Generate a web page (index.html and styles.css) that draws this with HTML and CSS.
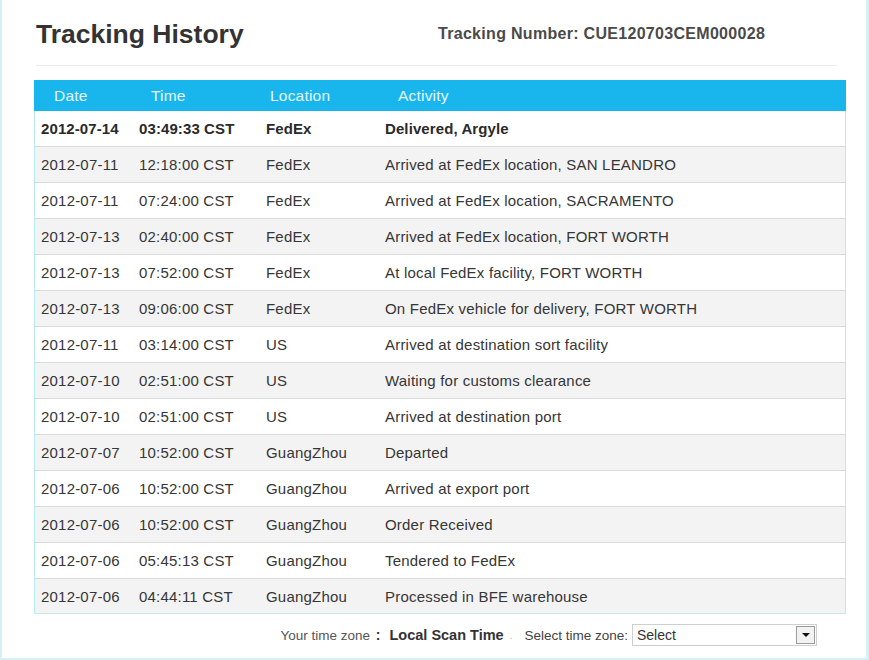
FILE: index.html
```html
<!DOCTYPE html>
<html>
<head>
<meta charset="utf-8">
<link rel="stylesheet" href="styles.css">
</head>
<body>
<div class="frame">
  <div class="wrap">
    <div class="top">
      <h1 class="title">Tracking History</h1>
      <div class="tracking">Tracking Number: CUE120703CEM000028</div>
    </div>
    <div class="sep"></div>
    <div class="table">
      <div class="thead">
        <div class="h h-date">Date</div>
        <div class="h h-time">Time</div>
        <div class="h h-loc">Location</div>
        <div class="h h-act">Activity</div>
      </div>
      <div class="row bold"><div>2012-07-14</div><div>03:49:33 CST</div><div>FedEx</div><div>Delivered, Argyle</div></div>
      <div class="row"><div>2012-07-11</div><div>12:18:00 CST</div><div>FedEx</div><div>Arrived at FedEx location, SAN LEANDRO</div></div>
      <div class="row"><div>2012-07-11</div><div>07:24:00 CST</div><div>FedEx</div><div>Arrived at FedEx location, SACRAMENTO</div></div>
      <div class="row"><div>2012-07-13</div><div>02:40:00 CST</div><div>FedEx</div><div>Arrived at FedEx location, FORT WORTH</div></div>
      <div class="row"><div>2012-07-13</div><div>07:52:00 CST</div><div>FedEx</div><div>At local FedEx facility, FORT WORTH</div></div>
      <div class="row"><div>2012-07-13</div><div>09:06:00 CST</div><div>FedEx</div><div>On FedEx vehicle for delivery, FORT WORTH</div></div>
      <div class="row"><div>2012-07-11</div><div>03:14:00 CST</div><div>US</div><div>Arrived at destination sort facility</div></div>
      <div class="row"><div>2012-07-10</div><div>02:51:00 CST</div><div>US</div><div>Waiting for customs clearance</div></div>
      <div class="row"><div>2012-07-10</div><div>02:51:00 CST</div><div>US</div><div>Arrived at destination port</div></div>
      <div class="row"><div>2012-07-07</div><div>10:52:00 CST</div><div>GuangZhou</div><div>Departed</div></div>
      <div class="row"><div>2012-07-06</div><div>10:52:00 CST</div><div>GuangZhou</div><div>Arrived at export port</div></div>
      <div class="row"><div>2012-07-06</div><div>10:52:00 CST</div><div>GuangZhou</div><div>Order Received</div></div>
      <div class="row"><div>2012-07-06</div><div>05:45:13 CST</div><div>GuangZhou</div><div>Tendered to FedEx</div></div>
      <div class="row"><div>2012-07-06</div><div>04:44:11 CST</div><div>GuangZhou</div><div>Processed in BFE warehouse</div></div>
    </div>
    <div class="footer">
      <span class="tz-label">Your time zone <b class="colon">:</b></span>
      <span class="tz-value">Local Scan Time</span>
      <span class="dot">.</span>
      <span class="sel-label">Select time zone:</span>
      <div class="select">
        <span class="sel-text">Select</span>
        <span class="sel-btn"><span class="tri"></span></span>
      </div>
    </div>
  </div>
</div>
</body>
</html>
```
FILE: styles.css
```css
html, body {
  margin: 0;
  padding: 0;
  background: #fff;
}
body {
  font-family: "Liberation Sans", Arial, sans-serif;
  color: #333;
}
.frame {
  width: 869px;
  height: 660px;
  box-sizing: border-box;
  border-left: 2px solid #d4f1f5;
  border-right: 3px solid #d4f1f5;
  border-bottom: 2px solid #d4f1f5;
  background: #fff;
}
.wrap {
  margin: 0 20px 0 32px;
}
.top {
  display: flex;
  align-items: center;
  padding-top: 19px;
  height: 30px;
}
.title {
  flex: 0 0 402px;
  margin: 0;
  padding-left: 2px;
  font-size: 26.5px;
  line-height: 30px;
  font-weight: bold;
  color: #333;
}
.tracking {
  font-size: 16px;
  font-weight: bold;
  color: #4a4a4a;
  letter-spacing: 0.3px;
}
.sep {
  margin: 16px 9px 0 2px;
  height: 1px;
  background: #ececec;
}
.table {
  margin-top: 14px;
  border-left: 1px solid #b6ebf6;
  border-right: 1px solid #b6ebf6;
  border-bottom: 1px solid #c9e6ec;
}
.thead {
  display: grid;
  grid-template-columns: 105px 127px 119px 1fr;
  height: 31px;
  align-items: center;
  background: #19b6ee;
  margin: 0 -1px;
}
.h {
  color: #e4f6fd;
  font-size: 15.5px;
  letter-spacing: 0.2px;
}
.h-date { padding-left: 20px; }
.h-time { padding-left: 12px; }
.h-loc { padding-left: 4px; }
.h-act { padding-left: 13px; }
.row {
  display: grid;
  grid-template-columns: 98px 127px 119px 1fr;
  padding-left: 6px;
  height: 35px;
  align-items: center;
  border-bottom: 1px solid #dadada;
  font-size: 15px;
  letter-spacing: 0.2px;
  color: #363636;
}
.row:nth-child(odd) {
  background: #f3f3f3;
}
.row:last-child {
  border-bottom: none;
  height: 34px;
}
.row.bold {
  font-weight: bold;
  letter-spacing: 0.1px;
  color: #2a2a2a;
}
.footer {
  display: flex;
  align-items: center;
  justify-content: flex-end;
  margin-top: 10px;
  padding-right: 29px;
  height: 22px;
}
.tz-label {
  font-size: 13.5px;
  color: #555;
}
.colon {
  font-size: 14px;
  color: #333;
  margin-left: 2px;
}
.tz-value {
  margin-left: 9px;
  font-size: 14.5px;
  font-weight: bold;
  color: #333;
}
.dot {
  margin-left: 6px;
  font-size: 10px;
  color: #bbb;
}
.sel-label {
  margin-left: 12px;
  font-size: 13.5px;
  color: #444;
}
.select {
  margin-left: 4px;
  width: 185px;
  height: 22px;
  box-sizing: border-box;
  border: 1px solid #cfcfcf;
  display: flex;
  align-items: center;
  justify-content: space-between;
  background: #fff;
}
.sel-text {
  padding-left: 4px;
  font-size: 14px;
  color: #333;
}
.sel-btn {
  width: 19px;
  height: 18px;
  margin-right: 1px;
  box-sizing: border-box;
  border: 1px solid #9a9a9a;
  background: #f2f2f2;
  display: flex;
  align-items: center;
  justify-content: center;
}
.tri {
  width: 0;
  height: 0;
  border-left: 4px solid transparent;
  border-right: 4px solid transparent;
  border-top: 4px solid #111;
}
```
